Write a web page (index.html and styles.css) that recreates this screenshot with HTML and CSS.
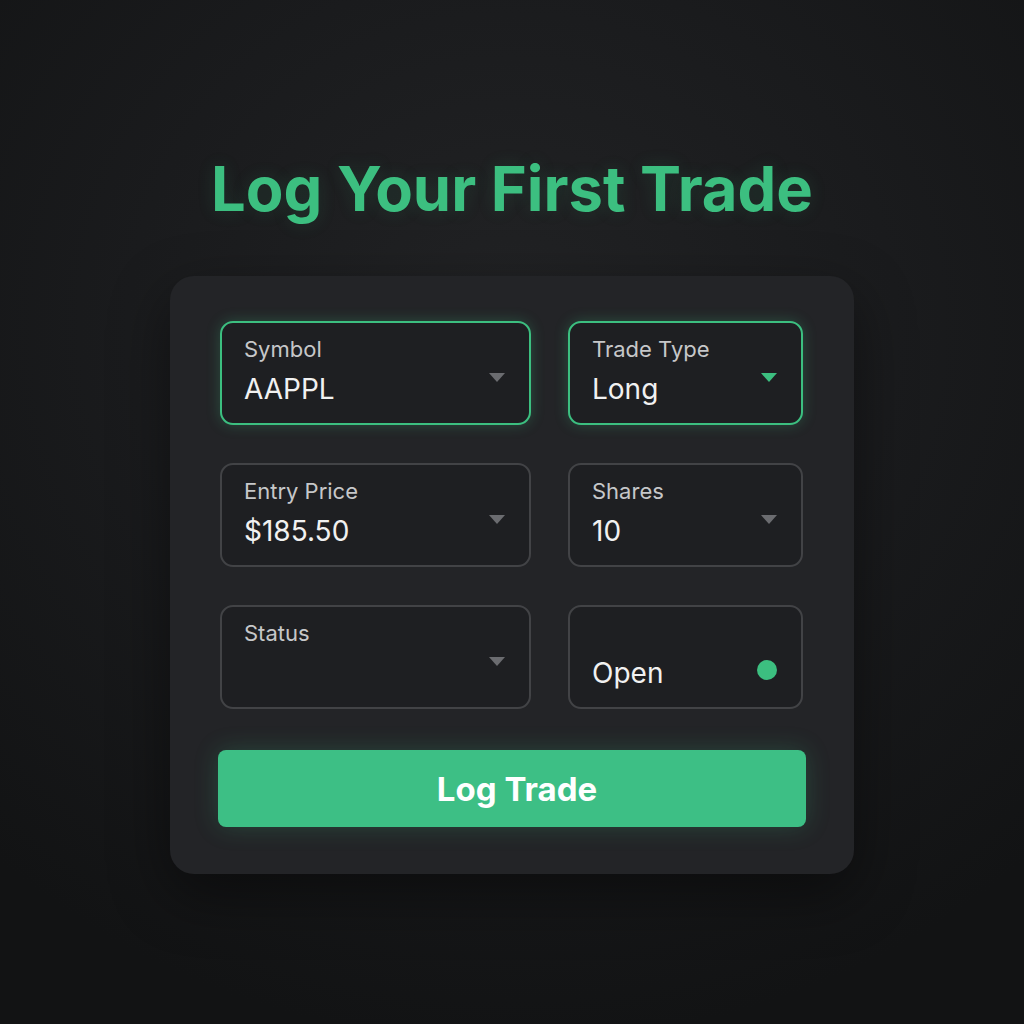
FILE: index.html
```html
<!DOCTYPE html>
<html lang="en">
<head>
<meta charset="utf-8">
<title>Log Your First Trade</title>
<link rel="stylesheet" href="styles.css">
</head>
<body>
<main class="page">
  <h1 class="title">Log Your First Trade</h1>
  <section class="card">
    <div class="grid">
      <div class="field active">
        <div class="content">
          <div class="label">Symbol</div>
          <div class="value">AAPPL</div>
        </div>
        <span class="arrow"></span>
      </div>
      <div class="field active">
        <div class="content">
          <div class="label">Trade Type</div>
          <div class="value">Long</div>
        </div>
        <span class="arrow green"></span>
      </div>
      <div class="field">
        <div class="content">
          <div class="label">Entry Price</div>
          <div class="value">$185.50</div>
        </div>
        <span class="arrow"></span>
      </div>
      <div class="field">
        <div class="content">
          <div class="label">Shares</div>
          <div class="value">10</div>
        </div>
        <span class="arrow"></span>
      </div>
      <div class="field">
        <div class="content">
          <div class="label">Status</div>
          <div class="value"></div>
        </div>
        <span class="arrow"></span>
      </div>
      <div class="field">
        <div class="content">
          <div class="label"></div>
          <div class="value value-row">Open<span class="dot"></span></div>
        </div>
      </div>
    </div>
    <button class="submit" type="button">Log Trade</button>
  </section>
</main>
</body>
</html>
```

FILE: styles.css
```css
* { box-sizing: border-box; }

html, body {
  margin: 0;
  height: 100%;
}

body {
  background: radial-gradient(ellipse 75% 70% at 50% 32%, #222325 0%, #1a1b1d 50%, #121314 100%);
  font-family: Inter, "Liberation Sans", sans-serif;
  color: #f0f0f0;
}

.page {
  display: flex;
  flex-direction: column;
  align-items: center;
  padding-top: 153px;
}

.title {
  margin: 0;
  font-size: 61.5px;
  line-height: 72px;
  font-weight: 700;
  color: #3cbf80;
  letter-spacing: 0;
  text-shadow: 0 0 18px rgba(60, 191, 128, 0.15);
}

.card {
  margin-top: 51px;
  width: 684px;
  padding: 45px 50px 47px 50px;
  background: #232427;
  border-radius: 24px;
  box-shadow: 0 20px 60px rgba(0, 0, 0, 0.45);
}

.grid {
  display: grid;
  grid-template-columns: 311px 235px;
  column-gap: 37px;
  row-gap: 38px;
}

.field {
  height: 104px;
  display: flex;
  align-items: center;
  padding: 13px 24px 0 22px;
  background: #1e1f22;
  border: 2px solid #424346;
  border-radius: 13px;
}

.field.active {
  border-color: #3cbf80;
  box-shadow: 0 0 14px rgba(60, 191, 128, 0.28);
}

.content {
  flex: 1;
  align-self: flex-start;
  display: flex;
  flex-direction: column;
  gap: 10px;
}

.label {
  height: 26px;
  font-size: 22px;
  line-height: 26px;
  color: #c6c7c9;
}

.value {
  height: 34px;
  font-size: 28px;
  line-height: 34px;
  color: #f1f1f1;
}

.value-row {
  display: flex;
  align-items: center;
  justify-content: space-between;
}

.dot {
  width: 20px;
  height: 20px;
  border-radius: 50%;
  background: #3cbf80;
  margin-top: -6px;
}

.arrow {
  width: 0;
  height: 0;
  border-left: 8px solid transparent;
  border-right: 8px solid transparent;
  border-top: 9px solid #6b6c70;
  margin-top: -4px;
}

.arrow.green {
  border-top-color: #3cbf80;
}

.submit {
  display: block;
  margin: 41px -2px 0 -2px;
  width: calc(100% + 4px);
  height: 77px;
  padding: 0 0 0 10px;
  border: none;
  border-radius: 8px;
  background: #3dbf85;
  color: #ffffff;
  font-family: Inter, "Liberation Sans", sans-serif;
  font-size: 33px;
  font-weight: 700;
  box-shadow: 0 0 24px rgba(61, 191, 133, 0.22);
}
```
